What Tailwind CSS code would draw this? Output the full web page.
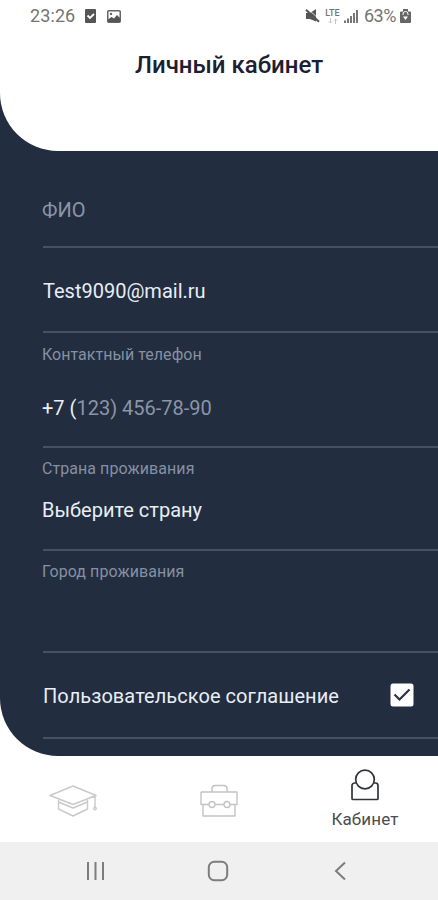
<!DOCTYPE html>
<html lang="ru">
<head>
    <meta charset="UTF-8">
    <meta name="viewport" content="width=device-width, initial-scale=1.0">
    <title>Личный кабинет</title>
    <script src="https://cdn.jsdelivr.net/npm/@tailwindcss/browser@4"></script>
</head>
<body class="flex h-[900px] w-[438px] flex-col overflow-hidden bg-white font-[Roboto,sans-serif] text-[#e8edf6]">

    <div class="bg-[#222d3f]">
        <header class="h-[151px] rounded-bl-[58px] bg-white">
            <!-- Status bar -->
            <div class="flex h-8 items-center pr-[27px] pl-[30px] text-lg leading-none text-[#747474]">
                <span class="w-[46px] whitespace-nowrap tracking-[0.1px]">23:26</span>
                <svg class="ml-[9px]" width="11" height="14" viewBox="0 0 11 14">
                    <rect width="11" height="14" rx="1" fill="#555" />
                    <path d="M2.5 6.5l2.5 2.5 4-4" fill="none" stroke="#fff" stroke-width="1.8" />
                </svg>
                <svg class="ml-[11px]" width="14" height="13" viewBox="0 0 14 13">
                    <rect x=".75" y=".75" width="12.5" height="11.5" rx="1" fill="none" stroke="#666" stroke-width="1.5" />
                    <path d="M1 12V9.5l3.5-2.5L7 8.5 10 5l3 3v4z" fill="#555" />
                    <circle cx="4" cy="4" r="1.2" fill="#666" />
                </svg>
                <svg class="ml-auto" width="15" height="14" viewBox="0 0 15 14">
                    <path d="M1 4h4L11 0v12.5L5 10H1z" fill="#555" />
                    <path d="M3 0l12 11" stroke="#fff" stroke-width=".8" />
                    <path d="M1 .8l13 12" stroke="#555" stroke-width="2" />
                </svg>
                <div class="ml-[5px] flex w-[15px] flex-col items-center">
                    <span class="text-[9px] leading-[8px] font-medium">LTE</span>
                    <svg class="mt-px" width="10" height="6" viewBox="0 0 10 6" fill="none" stroke="#c4c4c4">
                        <path d="M2.5 0v5M1 3.5L2.5 5 4 3.5M7.5 6V1M6 2.5L7.5 1 9 2.5" />
                    </svg>
                </div>
                <svg class="ml-[4px]" width="14" height="13" viewBox="0 0 14 13" fill="#777">
                    <path d="M0 10.5h2V13H0zM3 8.5h2V13H3zM6 6h2v7H6zM9 3h2v10H9zM12 0h2v13h-2z" />
                </svg>
                <span class="ml-[6px] w-[33px] whitespace-nowrap tracking-[-0.5px]">63%</span>
                <svg class="ml-[3px]" width="11" height="14" viewBox="0 0 11 14">
                    <path d="M3 0h5v2.5h2a1 1 0 0 1 1 1V13a1 1 0 0 1-1 1H1a1 1 0 0 1-1-1V3.5a1 1 0 0 1 1-1h2z" fill="#666" />
                    <path d="M3 6V5a2.5 2.5 0 0 1 5 0v1" fill="none" stroke="#fff" />
                    <path d="M3 7.5l2.5 3.5L8 7.5z" fill="#fff" />
                </svg>
            </div>
            <h1 class="mt-[17px] pl-[135px] text-2xl leading-8 font-medium whitespace-nowrap text-[#1c2030]">Личный кабинет</h1>
        </header>
    </div>

    <main class="h-[605px] rounded-bl-[58px] bg-[#222d3f] pl-[42px] text-xl leading-6">
        <div class="ml-px h-[97px] border-b-2 border-[#465163] pt-[47px] text-[#8b95a8]"><span class="-ml-px">ФИО</span></div>
        <div class="ml-px h-[85px] border-b-2 border-[#465163] pt-[31px]">Test9090@mail.ru</div>
        <div class="ml-px h-[115px] border-b-2 border-[#465163] pt-[12px]">
            <p class="-ml-px text-base leading-5 tracking-[0.03px] text-[#8590a3]">Контактный телефон</p>
            <p class="-ml-px mt-[31px]">+7 (<span class="text-[#8b95a8]">123) 456-78-90</span></p>
        </div>
        <div class="ml-px h-[103px] border-b-2 border-[#465163] pt-[11px]">
            <p class="-ml-px text-base leading-5 tracking-[0.06px] text-[#8590a3]">Страна проживания</p>
            <p class="-ml-px mt-[19px]">Выберите страну</p>
        </div>
        <div class="ml-px h-[102px] border-b-2 border-[#465163] pt-[11px]">
            <p class="-ml-px text-base leading-5 tracking-[0.06px] text-[#8590a3]">Город проживания</p>
        </div>
        <div class="ml-px flex h-[86px] items-center justify-between border-b-2 border-[#465163] pr-6">
            <span class="pt-px tracking-[0.06px]">Пользовательское соглашение</span>
            <svg width="24" height="24" viewBox="0 0 24 24">
                <rect x=".5" y=".5" width="23" height="23" rx="2.5" fill="#fff" />
                <path d="M4.5 11.5l5 5L19.5 6.5" fill="none" stroke="#2b3240" stroke-width="2.2" />
            </svg>
        </div>
    </main>

    <!-- Tab bar -->
    <nav class="grid h-[86px] grid-cols-3 bg-white">
        <a class="flex justify-center pt-[28px]">
            <svg width="50" height="34" viewBox="0 0 50 34" fill="none" stroke="#c9c9c9" stroke-width="1.4" stroke-linejoin="round">
                <path d="M2 11.5L25 2l23 9.5-23 9zM10.500 16v9L25 32l14.500-7v-9M10.500 18L25 24l14.500-6M47 12v11" />
                <circle cx="47" cy="24.500" r="1.200" />
            </svg>
        </a>
        <a class="flex justify-center pt-[28px]">
            <svg width="38" height="34" viewBox="0 0 38 34" fill="none" stroke="#c4c4c4" stroke-width="1.4" stroke-linejoin="round">
                <path d="M12 8V4.500a3 3 0 0 1 3-3h9a3 3 0 0 1 3 3V8M1 8h36v12.500h-7M9 20.500H1V8M15 20.500h9M3 20.500V32h32V20.500" />
                <circle cx="12" cy="20.500" r="3" />
                <circle cx="27" cy="20.500" r="3" />
            </svg>
        </a>
        <a class="flex flex-col items-center pt-[13px] text-[17px] leading-5 text-[#4a4d52]">
            <svg width="28" height="32" viewBox="0 0 28 32" fill="none" stroke="#30343a" stroke-width="1.7">
                <circle cx="14" cy="10.5" r="9.3" />
                <path d="M5 14H3.500A2.500 2.500 0 0 0 1 16.500V29.500a1 1 0 0 0 1 1h24a1 1 0 0 0 1-1V16.500A2.500 2.500 0 0 0 24.500 14H23" />
            </svg>
            <span class="mt-[8px] tracking-[0.15px]">Кабинет</span>
        </a>
    </nav>

    <!-- System navigation -->
    <footer class="h-[58px] bg-[#f0f0f0]">
        <div class="flex h-full items-center pl-[86px]">
            <svg width="20" height="20" viewBox="0 0 20 20" stroke="#7d7d7d" stroke-width="2">
                <path d="M2 1v18M9.5 1v18M17 1v18" />
            </svg>
            <svg class="ml-[101px]" width="22" height="22" viewBox="0 0 22 22" fill="none" stroke="#7d7d7d" stroke-width="2">
                <rect x="1.8" y="1.8" width="18.4" height="18.4" rx="5.5" />
            </svg>
            <svg class="ml-[105px]" width="12" height="20" viewBox="0 0 12 20" fill="none" stroke="#7d7d7d" stroke-width="2">
                <path d="M11 1.5L2 10l9 8.5" />
            </svg>
        </div>
    </footer>

</body>
</html>
